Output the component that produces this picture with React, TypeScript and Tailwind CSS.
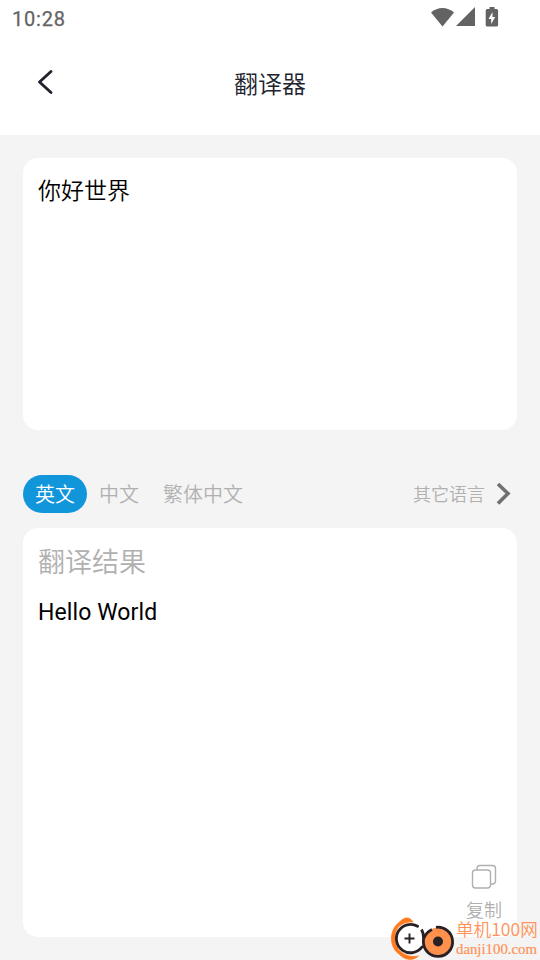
const LATIN = "font-['Roboto',sans-serif]";
const CJK = "font-['Noto_Sans_CJK_SC',sans-serif]";

const languages = ["英文", "中文", "繁体中文"];

const StatusBar = () => (
  <div className={`flex h-[37px] items-center justify-between pl-3 pr-[41px] text-[#636363] ${LATIN}`}>
    <span className="text-[20px] leading-[38px] tracking-[0.8px] [-webkit-text-stroke:0.25px]">10:28</span>
    <svg width="70" height="24" viewBox="0 0 70 24" fill="currentColor" className="-mt-0.5">
      <path d="M2 6.500C8.500 .5 18.500 .5 25 6.500L13.500 20.500Z" />
      <path d="M46 1V20H27Z" />
      <path
        fillRule="evenodd"
        d="M60.500 1h5v2h2a1.600 1.600 0 0 1 1.600 1.600V19a1.600 1.600 0 0 1-1.600 1.600h-9.200a1.600 1.600 0 0 1-1.600-1.600V4.600A1.600 1.600 0 0 1 58.300 3H60.500ZM63.500 6l-4 7h2.700v5l4-7H63.500Z"
      />
    </svg>
  </div>
);

const Header = () => (
  <div className="grid h-[98px] grid-cols-[60px_1fr_60px] items-start pt-[29px]">
    <button className="flex h-8 items-center pl-9" aria-label="返回">
      <svg width="20" height="28" viewBox="0 0 20 28" fill="none" stroke="#20222d" strokeWidth="2.900" strokeLinecap="round" strokeLinejoin="round">
        <path d="M15 3.500L3.500 14L15 24.500" />
      </svg>
    </button>
    <h1 className="pt-px text-center text-[24px] leading-8 font-[350] text-[#20222d]">翻译器</h1>
  </div>
);

const LanguageBar = () => (
  <div className="mt-[45px] flex h-[38px] items-center justify-between pr-[5px]">
    <div className="flex">
      {languages.map((name, i) => (
        <button
          key={name}
          className={`h-[38px] rounded-full px-3 text-[20px] leading-[38px] font-[350] ${i === 0 ? "bg-[#1296db] text-white" : "text-[#b0b0b0]"}`}
        >
          {name}
        </button>
      ))}
    </div>
    <button className="flex items-center gap-[9px] text-[18px] leading-9 font-[350] text-[#b0b0b0]">
      <span className="pb-0.5">其它语言</span>
      <svg width="18" height="26" viewBox="0 0 18 26" fill="none" stroke="#707070" strokeWidth="3.600">
        <path d="M4 3L14 12.500L4 22.500" />
      </svg>
    </button>
  </div>
);

const CopyButton = () => (
  <button className="flex w-9 flex-col items-center text-[#b0b0b0]">
    <svg width="26" height="26" viewBox="0 0 26 26" fill="none" stroke="currentColor" strokeWidth="1.400">
      <rect x="1.500" y="6" width="18" height="18" rx="3" />
      <path d="M6 6V4.500Q6 1.500 9 1.500H21.500Q24.500 1.500 24.500 4.500V17Q24.500 20 21.500 20H19.500" />
    </svg>
    <span className="mt-[9px] text-[18px] leading-5 font-[350]">复制</span>
  </button>
);

const Watermark = () => (
  <div className="absolute right-0 bottom-0 flex h-[43px] w-[150px]">
    <svg width="66" height="43" viewBox="0 0 66 43" fill="none">
      <path
        d="M23 5C19.500 -1 14 0 9 5.500C-1 13 -1 30 9 37C15 43.500 23 44 28.500 39C22 40.500 16 39 11 35C3 28 3 14 10 8.500C14 5.500 18 4.500 23 5Z"
        fill="#ff7a1c"
        stroke="#ff7a1c"
        strokeWidth=".8"
      />
      <circle cx="20.500" cy="21.500" r="15" fill="#fff" />
      <path d="M27.600 9.200A14.200 14.200 0 1 0 32 30" stroke="#292024" strokeWidth="2.800" strokeLinecap="round" />
      <path d="M14.500 21.500H24.500M19.500 16.500V26.500" stroke="#292024" strokeWidth="1.900" />
      <circle cx="48" cy="24.500" r="14" fill="#ff914d" />
      <path d="M44 10.500L38 16L36 19L34 14L38 10L43 9Z" fill="#fff" />
      <path
        d="M46 10.300A14.600 14.600 0 1 1 33.400 24.500C33.900 20 33.400 16 31.500 12.500M34 21Q36 15.500 42 12.500"
        stroke="#292024"
        strokeWidth="2.800"
      />
      <circle cx="48" cy="24.500" r="5" fill="#292024" />
    </svg>
    <div className="flex flex-col whitespace-nowrap pt-0.5 text-[#ff9257]">
      <span className="text-[17.600px] leading-5 font-[350]">单机100网</span>
      <span className="pt-0.5 font-['Liberation_Serif',serif] text-[14.800px] leading-4 [-webkit-text-stroke:0.2px]">danji100.com</span>
    </div>
  </div>
);

export default function App() {
  return (
    <div className={`relative h-[960px] w-[540px] overflow-hidden bg-[#f4f4f4] ${CJK}`}>
      <div className="bg-white">
        <StatusBar />
        <Header />
      </div>

      <main className="px-[23px] pt-[23px]">
        <section className="h-[272px] rounded-[15px] bg-white px-[15px] pt-[15px]">
          <p className="text-[23px] leading-8 font-[350] text-black">你好世界</p>
        </section>

        <LanguageBar />

        <section className="mt-[15px] flex h-[409px] flex-col rounded-[15px] bg-white px-[15px] pt-[13px]">
          <h2 className="text-[27px] leading-10 font-[350] text-[#b0b0b0]">翻译结果</h2>
          <p className={`mt-4 text-[23px] leading-8 tracking-[0.1px] text-black ${LATIN}`}>Hello World</p>
          <div className="mt-auto mb-[18px] self-end">
            <CopyButton />
          </div>
        </section>
      </main>

      <Watermark />
    </div>
  );
}
